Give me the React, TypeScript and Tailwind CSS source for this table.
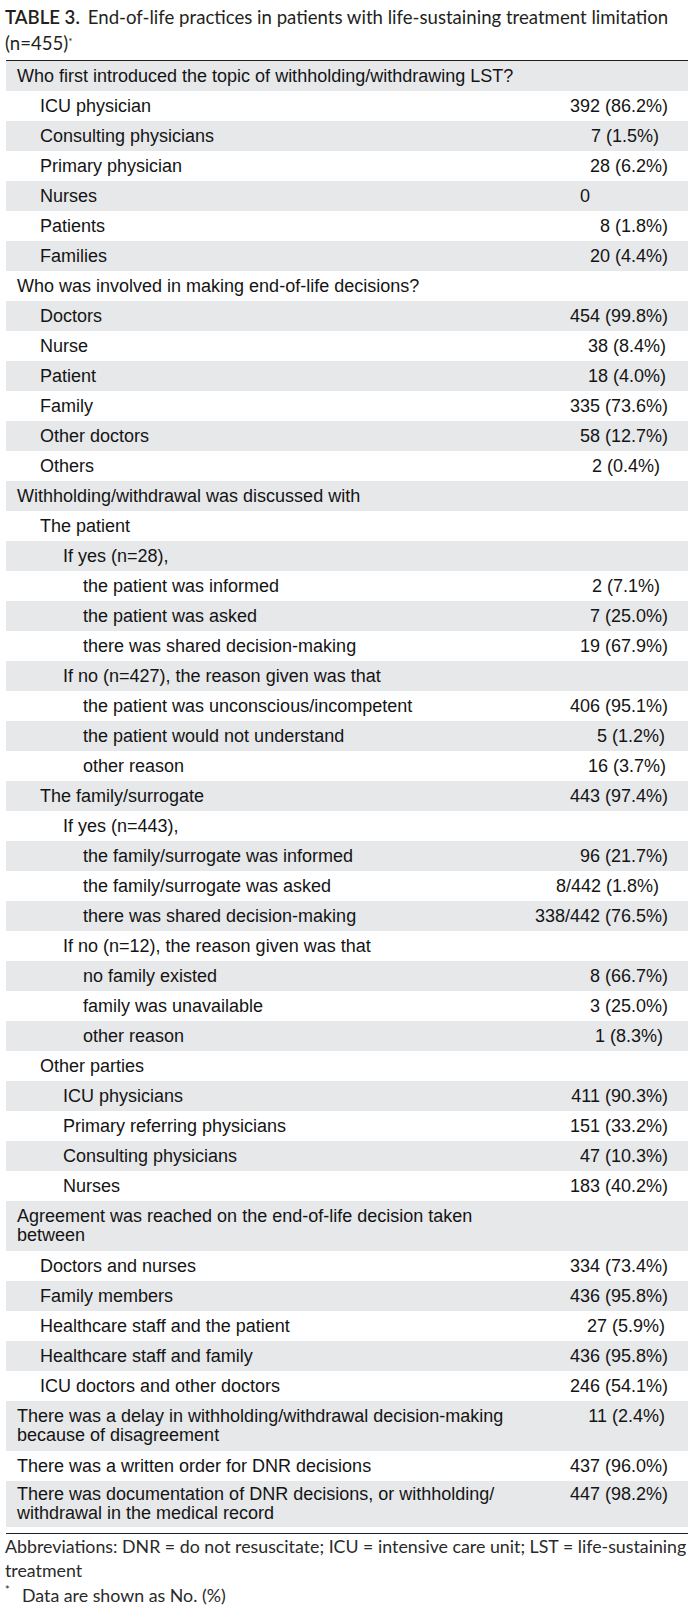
type Row = {
  label: React.ReactNode;
  value?: string;
  level: 0 | 1 | 2 | 3;
  pad?: string;
  tall?: string;
};

const levelPad = ['pl-[11px]', 'pl-[34px]', 'pl-[57px]', 'pl-[77px]'];

const rows: Row[] = [
  { label: 'Who first introduced the topic of withholding/withdrawing LST?', level: 0 },
  { label: 'ICU physician', value: '392 (86.2%)', level: 1 },
  { label: 'Consulting physicians', value: '7 (1.5%)', level: 1, pad: 'pr-[29px]' },
  { label: 'Primary physician', value: '28 (6.2%)', level: 1 },
  { label: 'Nurses', value: '0', level: 1, pad: 'pr-[98px]' },
  { label: 'Patients', value: '8 (1.8%)', level: 1 },
  { label: 'Families', value: '20 (4.4%)', level: 1 },
  { label: 'Who was involved in making end-of-life decisions?', level: 0 },
  { label: 'Doctors', value: '454 (99.8%)', level: 1 },
  { label: 'Nurse', value: '38 (8.4%)', level: 1, pad: 'pr-[22px]' },
  { label: 'Patient', value: '18 (4.0%)', level: 1, pad: 'pr-[22px]' },
  { label: 'Family', value: '335 (73.6%)', level: 1 },
  { label: 'Other doctors', value: '58 (12.7%)', level: 1 },
  { label: 'Others', value: '2 (0.4%)', level: 1, pad: 'pr-[28px]' },
  { label: 'Withholding/withdrawal was discussed with', level: 0 },
  { label: 'The patient', level: 1 },
  { label: 'If yes (n=28),', level: 2 },
  { label: 'the patient was informed', value: '2 (7.1%)', level: 3, pad: 'pr-[28px]' },
  { label: 'the patient was asked', value: '7 (25.0%)', level: 3 },
  { label: 'there was shared decision-making', value: '19 (67.9%)', level: 3 },
  { label: 'If no (n=427), the reason given was that', level: 2 },
  { label: 'the patient was unconscious/incompetent', value: '406 (95.1%)', level: 3 },
  { label: 'the patient would not understand', value: '5 (1.2%)', level: 3, pad: 'pr-[23px]' },
  { label: 'other reason', value: '16 (3.7%)', level: 3, pad: 'pr-[22px]' },
  { label: 'The family/surrogate', value: '443 (97.4%)', level: 1 },
  { label: 'If yes (n=443),', level: 2 },
  { label: 'the family/surrogate was informed', value: '96 (21.7%)', level: 3 },
  { label: 'the family/surrogate was asked', value: '8/442 (1.8%)', level: 3, pad: 'pr-[29px]' },
  { label: 'there was shared decision-making', value: '338/442 (76.5%)', level: 3 },
  { label: 'If no (n=12), the reason given was that', level: 2 },
  { label: 'no family existed', value: '8 (66.7%)', level: 3 },
  { label: 'family was unavailable', value: '3 (25.0%)', level: 3 },
  { label: 'other reason', value: '1 (8.3%)', level: 3, pad: 'pr-[25px]' },
  { label: 'Other parties', level: 1 },
  { label: 'ICU physicians', value: '411 (90.3%)', level: 2 },
  { label: 'Primary referring physicians', value: '151 (33.2%)', level: 2 },
  { label: 'Consulting physicians', value: '47 (10.3%)', level: 2 },
  { label: 'Nurses', value: '183 (40.2%)', level: 2 },
  {
    label: (
      <>
        Agreement was reached on the end-of-life decision taken
        <br />
        between
      </>
    ),
    level: 0,
    tall: 'h-[50px]',
  },
  { label: 'Doctors and nurses', value: '334 (73.4%)', level: 1 },
  { label: 'Family members', value: '436 (95.8%)', level: 1 },
  { label: 'Healthcare staff and the patient', value: '27 (5.9%)', level: 1, pad: 'pr-[23px]' },
  { label: 'Healthcare staff and family', value: '436 (95.8%)', level: 1 },
  { label: 'ICU doctors and other doctors', value: '246 (54.1%)', level: 1 },
  {
    label: (
      <>
        There was a delay in withholding/withdrawal decision-making
        <br />
        because of disagreement
      </>
    ),
    value: '11 (2.4%)',
    level: 0,
    pad: 'pr-[23px]',
    tall: 'h-[50px]',
  },
  { label: 'There was a written order for DNR decisions', value: '437 (96.0%)', level: 0 },
  {
    label: (
      <>
        There was documentation of DNR decisions, or withholding/
        <br />
        withdrawal in the medical record
      </>
    ),
    value: '447 (98.2%)',
    level: 0,
    tall: 'h-[46px]',
  },
];

function TableRow({ row, shaded }: { row: Row; shaded: boolean }) {
  const bg = shaded ? 'bg-[#e7e8ea]' : 'bg-white';
  if (row.tall) {
    return (
      <div className={`${bg} ${row.tall} ${levelPad[row.level]} ${row.pad ?? 'pr-[20px]'} flex items-center`}>
        <div className="flex w-full items-start justify-between leading-[19px]">
          <span className="whitespace-nowrap">{row.label}</span>
          {row.value && <span className="whitespace-nowrap">{row.value}</span>}
        </div>
      </div>
    );
  }
  return (
    <div
      className={`${bg} h-[30px] ${levelPad[row.level]} ${row.pad ?? 'pr-[20px]'} flex items-center justify-between leading-[20px]`}
    >
      <span className="whitespace-nowrap">{row.label}</span>
      {row.value && <span className="whitespace-nowrap">{row.value}</span>}
    </div>
  );
}

export default function App() {
  return (
    <div className="w-[691px] bg-white text-[#141414]">
      <div className="pl-[5px] pt-[4px] font-['Lato',sans-serif] text-[18.6px] leading-[26px] whitespace-nowrap text-[#231f20]">
        <span className="font-semibold">TABLE 3.</span>
        <span className="ml-[8px]">End-of-life practices in patients with life-sustaining treatment limitation</span>
        <br />
        (n=455)<sup className="text-[10px]">*</sup>
      </div>

      <div className="mt-[4px] ml-[6px] mr-[3px] font-['Liberation_Sans',Arial,sans-serif] text-[18px]">
        <div className="h-px bg-[#1f1f1f]" />
        {rows.map((row, i) => (
          <TableRow key={i} row={row} shaded={i % 2 === 0} />
        ))}
        <div className="mt-[6px] h-px bg-[#1f1f1f]" />
      </div>

      <div className="pl-[5px] font-['Lato',sans-serif] text-[17.8px] text-[#2a2a2a] whitespace-nowrap">
        <p className="leading-[24px]">
          Abbreviations: DNR = do not resuscitate; ICU = intensive care unit; LST = life-sustaining
          <br />
          treatment
        </p>
        <p className="leading-[26px]">
          <span className="inline-block w-[17px] align-top text-[11px] leading-[16px]">*</span>
          Data are shown as No. (%)
        </p>
      </div>
    </div>
  );
}
